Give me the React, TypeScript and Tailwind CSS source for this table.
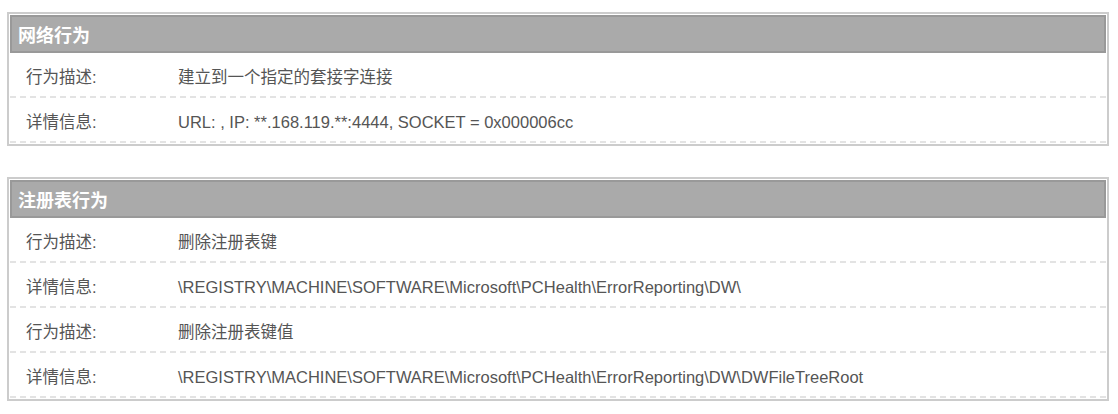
import React from "react";

type Row = { label: string; value: string };

const sections: { title: string; rows: Row[] }[] = [
  {
    title: "网络行为",
    rows: [
      { label: "行为描述:", value: "建立到一个指定的套接字连接" },
      { label: "详情信息:", value: "URL: , IP: **.168.119.**:4444, SOCKET = 0x000006cc" },
    ],
  },
  {
    title: "注册表行为",
    rows: [
      { label: "行为描述:", value: "删除注册表键" },
      {
        label: "详情信息:",
        value: "\\REGISTRY\\MACHINE\\SOFTWARE\\Microsoft\\PCHealth\\ErrorReporting\\DW\\",
      },
      { label: "行为描述:", value: "删除注册表键值" },
      {
        label: "详情信息:",
        value: "\\REGISTRY\\MACHINE\\SOFTWARE\\Microsoft\\PCHealth\\ErrorReporting\\DW\\DWFileTreeRoot",
      },
    ],
  },
];

function Section({ title, rows }: { title: string; rows: Row[] }) {
  return (
    <div className="border-2 border-[#cccccc] p-px bg-white">
      <div className="h-[38px] border-2 border-[#999999] bg-[#aaaaaa] flex items-center pl-[6px] pt-[5px]">
        <span className="text-white font-bold text-[18px]">{title}</span>
      </div>
      {rows.map((r, i) => (
        <div
          key={i}
          className="h-[45px] flex items-center pt-[6px] border-b-2 border-dashed border-[#e3e3e3] text-[16.5px] text-[#555555]"
        >
          <div className="w-[168px] pl-[16px] shrink-0">{r.label}</div>
          <div>{r.value}</div>
        </div>
      ))}
    </div>
  );
}

export default function App() {
  return (
    <div
      className="w-[1118px] h-[414px] bg-white pt-[12px] pl-[7px] pr-[9px] flex flex-col gap-[31px]"
      style={{ fontFamily: '"Liberation Sans", "Noto Sans CJK SC", sans-serif' }}
    >
      {sections.map((s) => (
        <Section key={s.title} title={s.title} rows={s.rows} />
      ))}
    </div>
  );
}
